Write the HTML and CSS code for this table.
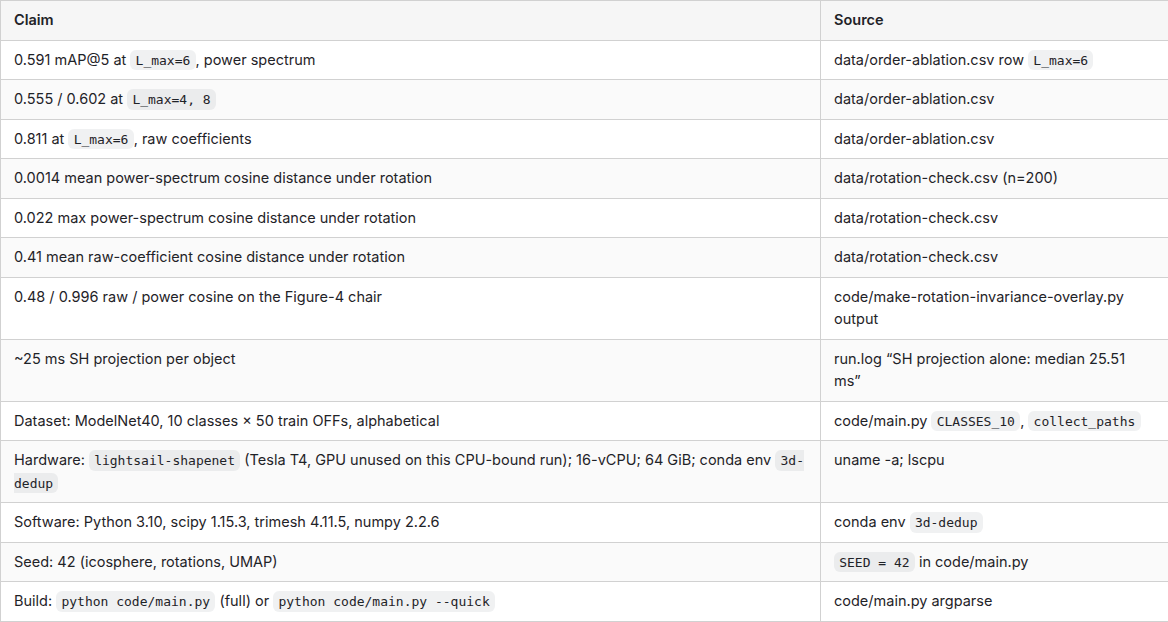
FILE: index.html
```html
<!DOCTYPE html>
<html>
<head>
<meta charset="utf-8">
<link rel="stylesheet" href="styles.css">
</head>
<body>
<table class="claims">
  <colgroup><col class="c-claim"><col class="c-source"></colgroup>
  <thead>
    <tr><th>Claim</th><th>Source</th></tr>
  </thead>
  <tbody>
    <tr><td>0.591 mAP@5 at <code>L_max=6</code>, power spectrum</td><td>data/order-ablation.csv row <code>L_max=6</code></td></tr>
    <tr><td>0.555 / 0.602 at <code>L_max=4, 8</code></td><td>data/order-ablation.csv</td></tr>
    <tr><td>0.811 at <code>L_max=6</code>, raw coefficients</td><td>data/order-ablation.csv</td></tr>
    <tr><td>0.0014 mean power-spectrum cosine distance under rotation</td><td>data/rotation-check.csv (n=200)</td></tr>
    <tr><td>0.022 max power-spectrum cosine distance under rotation</td><td>data/rotation-check.csv</td></tr>
    <tr><td>0.41 mean raw-coefficient cosine distance under rotation</td><td>data/rotation-check.csv</td></tr>
    <tr><td>0.48 / 0.996 raw / power cosine on the Figure-4 chair</td><td>code/make-rotation-invariance-overlay.py output</td></tr>
    <tr><td>~25 ms SH projection per object</td><td>run.log “SH projection alone: median 25.51 ms”</td></tr>
    <tr><td>Dataset: ModelNet40, 10 classes × 50 train OFFs, alphabetical</td><td>code/main.py <code>CLASSES_10</code>, <code>collect_paths</code></td></tr>
    <tr><td>Hardware: <code>lightsail-shapenet</code> (Tesla T4, GPU unused on this CPU-bound run); 16-vCPU; 64 GiB; conda env <code>3d-dedup</code></td><td>uname -a; lscpu</td></tr>
    <tr><td>Software: Python 3.10, scipy 1.15.3, trimesh 4.11.5, numpy 2.2.6</td><td>conda env <code>3d-dedup</code></td></tr>
    <tr><td>Seed: 42 (icosphere, rotations, UMAP)</td><td><code>SEED = 42</code> in code/main.py</td></tr>
    <tr><td>Build: <code>python code/main.py</code> (full) or <code>python code/main.py --quick</code></td><td>code/main.py argparse</td></tr>
  </tbody>
</table>
</body>
</html>
```
FILE: styles.css
```css
html, body {
  margin: 0;
  padding: 0;
  background: #ffffff;
}
body {
  font-family: Inter, "Noto Sans", "Liberation Sans", sans-serif;
  font-size: 14.5px;
  line-height: 22.5px;
  color: #1f2328;
}
.claims {
  width: 1168px;
  border-collapse: collapse;
  border-spacing: 0;
  table-layout: fixed;
}
.c-claim { width: 820px; }
.c-source { width: 348px; }
.claims th,
.claims td {
  border: 1px solid #d1d1d1;
  padding: 8px 13px;
  text-align: left;
  vertical-align: top;
}
.claims th {
  font-weight: 600;
  background: #f6f6f6;
}
.claims tbody tr:nth-child(even) {
  background: #fafafa;
}
.claims code {
  font-family: "DejaVu Sans Mono", "Liberation Mono", monospace;
  font-size: 13px;
  line-height: 1;
  padding: 0.2em 0.4em;
  border-radius: 6px;
  background: rgba(129, 139, 152, 0.12);
}
```
